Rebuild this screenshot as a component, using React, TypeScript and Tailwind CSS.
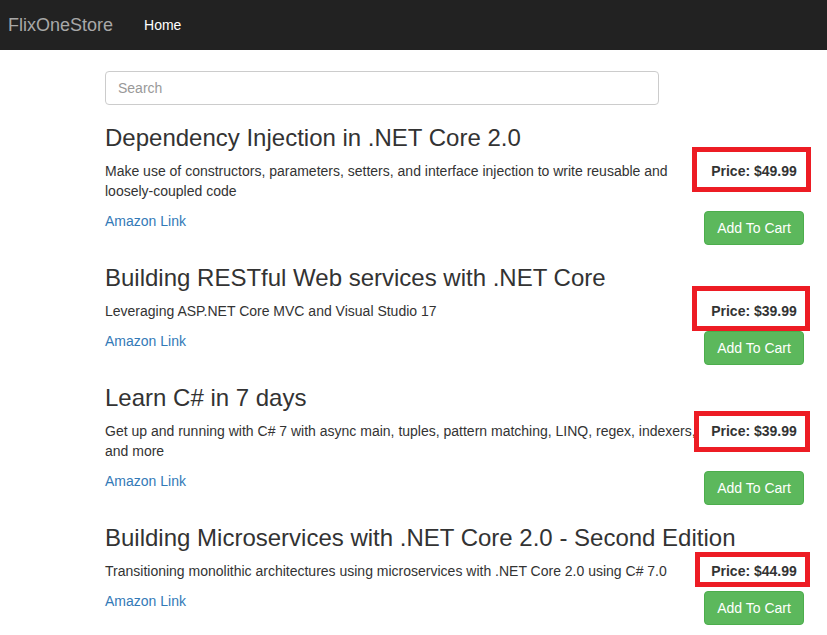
import React from "react";

type Book = {
	title: string;
	desc: string;
	price: string;
	box: string;
};

const books: Book[] = [
	{
		title: "Dependency Injection in .NET Core 2.0",
		desc: "Make use of constructors, parameters, setters, and interface injection to write reusable and loosely-coupled code",
		price: "$49.99",
		box: "left-[-1px] right-[-2px] top-[-14px] bottom-[-11px]",
	},
	{
		title: "Building RESTful Web services with .NET Core",
		desc: "Leveraging ASP.NET Core MVC and Visual Studio 17",
		price: "$39.99",
		box: "left-[-1px] right-[-1px] top-[-15px] bottom-[-10px]",
	},
	{
		title: "Learn C# in 7 days",
		desc: "Get up and running with C# 7 with async main, tuples, pattern matching, LINQ, regex, indexers, and more",
		price: "$39.99",
		box: "left-[1px] right-[-1px] top-[-10px] bottom-[-11px]",
	},
	{
		title: "Building Microservices with .NET Core 2.0 - Second Edition",
		desc: "Transitioning monolithic architectures using microservices with .NET Core 2.0 using C# 7.0",
		price: "$44.99",
		box: "left-[2px] right-[-1px] top-[-9px] bottom-[-6px]",
	},
];

function BookItem({ book }: { book: Book }) {
	return (
		<div>
			<h3 className="mt-5 mb-2.5 text-[24px] leading-[26px] font-medium text-[#333]">
				{book.title}
			</h3>
			<div className="flex">
				<p className="w-[600px] mb-2.5 text-sm leading-5 text-[#333]">{book.desc}</p>
				<div className="relative -ml-3 w-[116px] h-5 flex justify-center pl-[6px]">
					<span className="text-sm leading-5 font-bold text-[#333]">Price: {book.price}</span>
					<div className={"absolute border-[5px] border-[#ed1c24] " + book.box}></div>
				</div>
			</div>
			<div className="flex">
				<div className="w-[588px] text-sm leading-5">
					<a href="#" className="text-[#337ab7]">
						Amazon Link
					</a>
				</div>
				<div className="w-[116px] pl-[11px]">
					<button className="w-[100px] h-[34px] rounded bg-[#5cb85c] border border-[#4cae4c] text-white text-sm">
						Add To Cart
					</button>
				</div>
			</div>
		</div>
	);
}

export default function App() {
	return (
		<div className="min-h-screen bg-white font-['Liberation_Sans',Arial,sans-serif]">
			<nav className="h-[50px] bg-[#222] flex items-center">
				<span className="pl-2 text-[18px] text-[#a8a8a8]">FlixOneStore</span>
				<span className="ml-[31px] text-sm text-white">Home</span>
			</nav>
			<div className="pl-[105px] pt-[21px]">
				<input
					type="text"
					placeholder="Search"
					className="block w-[554px] h-[34px] px-3 border border-[#ccc] rounded text-sm text-[#555] placeholder:text-[#999] outline-none"
				/>
				{books.map((b) => (
					<BookItem key={b.title} book={b} />
				))}
			</div>
		</div>
	);
}
